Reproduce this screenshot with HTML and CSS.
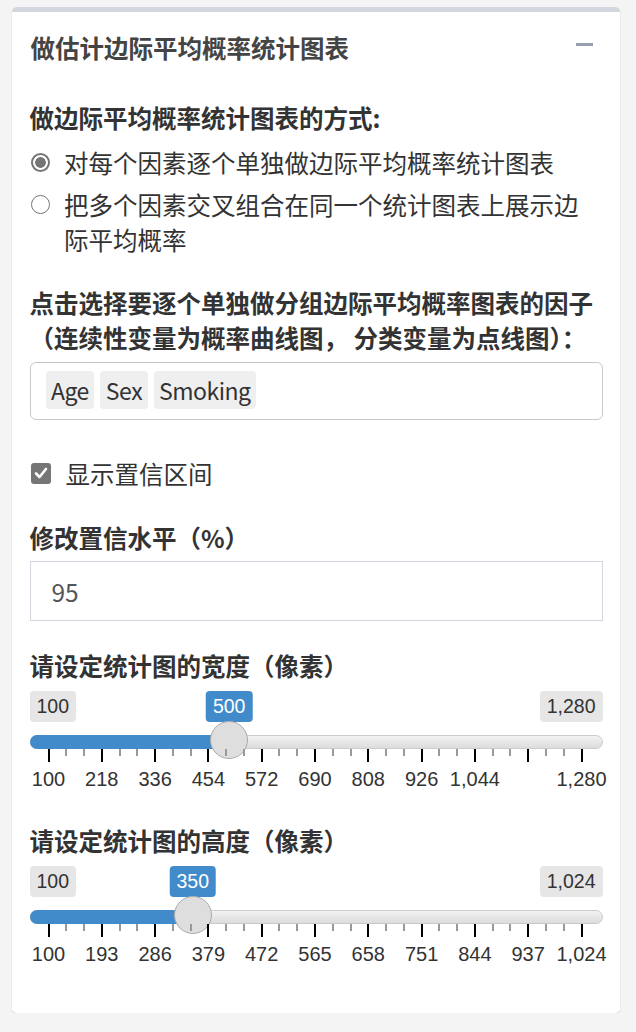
FILE: index.html
```html
<!DOCTYPE html>
<html lang="zh-CN">
<head>
  <meta charset="UTF-8">
  <meta name="viewport" content="width=device-width, initial-scale=1.0">
  <title>做估计边际平均概率统计图表</title>
  <link rel="stylesheet" href="styles.css">
</head>
<body>
  <div class="box">
    <div class="box-header">
      <h3 class="box-title">做估计边际平均概率统计图表</h3>
      <button class="btn-collapse" type="button"><span></span></button>
    </div>

    <div class="box-body">
      <div class="form-group group-radio">
        <label class="control-label">做边际平均概率统计图表的方式:</label>
        <div class="radio radio-first">
          <span class="radio-dot checked"></span>
          <span class="radio-text">对每个因素逐个单独做边际平均概率统计图表</span>
        </div>
        <div class="radio">
          <span class="radio-dot"></span>
          <span class="radio-text">把多个因素交叉组合在同一个统计图表上展示边际平均概率</span>
        </div>
      </div>

      <div class="form-group group-factors">
        <label class="control-label">点击选择要逐个单独做分组边际平均概率图表的因子（连续性变量为概率曲线图， 分类变量为点线图）：</label>
        <div class="selectize">
          <span class="tag">Age</span>
          <span class="tag">Sex</span>
          <span class="tag">Smoking</span>
        </div>
      </div>

      <div class="checkbox">
        <span class="check-box">
          <svg width="14" height="14" viewBox="0 0 14 14"><path d="M2 7.5 L5.5 11 L12 3" fill="none" stroke="#fff" stroke-width="2.6" stroke-linecap="round" stroke-linejoin="round"/></svg>
        </span>
        <span>显示置信区间</span>
      </div>

      <div class="form-group group-conf">
        <label class="control-label">修改置信水平（%）</label>
        <input class="form-control" type="text" value="95">
      </div>

      <div class="form-group group-slider">
        <label class="control-label">请设定统计图的宽度（像素）</label>
        <div class="irs" data-min="100" data-max="1280" data-value="500"
             data-labels="100 218 336 454 572 690 808 926 1,044 - 1,280"></div>
      </div>

      <div class="form-group group-last">
        <label class="control-label">请设定统计图的高度（像素）</label>
        <div class="irs" data-min="100" data-max="1024" data-value="350"
             data-labels="100 193 286 379 472 565 658 751 844 937 1,024"></div>
      </div>
    </div>
  </div>

  <script>
    function fmt(n) {
      return n.toLocaleString("en-US");
    }

    document.querySelectorAll(".irs").forEach(el => {
      const min = +el.dataset.min;
      const max = +el.dataset.max;
      const value = +el.dataset.value;
      const labels = el.dataset.labels.split(" ");
      const pos = ((value - min) / (max - min)).toFixed(4);
      const center = `calc(19px + (100% - 40px) * ${pos})`;

      let grid = "";
      for (let i = 0; i <= 10; i++) {
        grid += `<span class="irs-tick" style="left:${i * 10}%"></span>`;
        if (i < 10) {
          grid += `<span class="irs-tick small" style="left:${i * 10 + 10 / 3}%"></span>`;
          grid += `<span class="irs-tick small" style="left:${i * 10 + 20 / 3}%"></span>`;
        }
        if (labels[i] !== "-") {
          grid += `<span class="irs-grid-text" style="left:${i * 10}%">${labels[i]}</span>`;
        }
      }

      el.innerHTML = `
        <span class="irs-line"></span>
        <span class="irs-bar" style="width:${center}"></span>
        <span class="irs-min">${fmt(min)}</span>
        <span class="irs-max">${fmt(max)}</span>
        <span class="irs-single" style="left:${center}">${fmt(value)}</span>
        <span class="irs-handle" style="left:${center}"></span>
        <span class="irs-grid">${grid}</span>`;
    });
  </script>
</body>
</html>
```

FILE: styles.css
```css
* {
  box-sizing: border-box;
}

body {
  margin: 0;
  padding: 7px 0 0 12px;
  background-color: #f4f4f4;
  font-family: "Noto Sans CJK SC", "Noto Sans", sans-serif;
  font-size: 24.5px;
  line-height: 35px;
  color: #333;
}

.box {
  width: 608px;
  background-color: #fff;
  border-top: 5px solid #d2d6de;
  border-radius: 5px;
  box-shadow: 0 1px 2px rgba(0, 0, 0, 0.12);
}

.box-header {
  display: flex;
  justify-content: space-between;
  align-items: flex-start;
  padding: 17.5px 27px 17.5px 18.5px;
}

.box-title {
  margin: 0;
  font-size: 24.5px;
  line-height: 35px;
  font-weight: bold;
  color: #444;
}

.btn-collapse {
  display: block;
  padding: 13.5px 0 0;
  border: none;
  background: none;
}

.btn-collapse span {
  display: block;
  width: 17px;
  height: 3px;
  background-color: #97a0b3;
}

.box-body {
  padding: 17.5px 17.5px 48px;
}

.control-label {
  display: block;
  font-weight: bold;
  color: #333;
}

/* radio group */
.group-radio {
  margin-bottom: 27.5px;
}

.group-radio .control-label {
  margin-bottom: 10px;
}

.radio {
  display: flex;
  align-items: flex-start;
}

.radio-first {
  margin-bottom: 7.5px;
}

.radio-dot {
  flex: none;
  width: 19px;
  height: 19px;
  margin: 8px 14px 0 1.5px;
  border: 1.5px solid #767676;
  border-radius: 50%;
}

.radio-dot.checked {
  border-width: 2px;
  background: radial-gradient(circle, #767676 0 5px, transparent 5.6px);
}

.radio-text {
  flex: 1;
  padding-right: 10px;
}

/* factor picker */
.group-factors {
  margin-bottom: 35.5px;
}

.group-factors .control-label {
  margin-bottom: 7.5px;
}

.selectize {
  display: flex;
  gap: 6px;
  height: 58px;
  padding: 8px 15px;
  border: 1px solid #c8c8c8;
  border-radius: 6px;
}

.tag {
  height: 38px;
  line-height: 38px;
  padding: 0 5.5px;
  background-color: #efefef;
  border-radius: 4px;
  font-size: 23px;
  letter-spacing: -0.5px;
}

/* checkbox */
.checkbox {
  display: flex;
  align-items: center;
  margin-bottom: 29px;
}

.check-box {
  display: flex;
  align-items: center;
  justify-content: center;
  width: 20px;
  height: 21px;
  margin: 0 15px 0 1px;
  background-color: #767676;
  border-radius: 3px;
}

/* confidence input */
.group-conf {
  margin-bottom: 26.5px;
}

.group-conf .control-label {
  margin-bottom: 6.5px;
}

.form-control {
  display: block;
  width: 100%;
  height: 60px;
  padding: 0 21px;
  border: 1.5px solid #d2d6de;
  font-family: "Noto Sans CJK SC", "Noto Sans", sans-serif;
  font-size: 24.5px;
  color: #555;
  outline: none;
}

/* sliders */
.group-slider {
  margin-bottom: 32.5px;
}

.group-slider .control-label,
.group-last .control-label {
  margin-bottom: 8.5px;
}

.irs {
  position: relative;
  height: 99px;
  font-family: "Liberation Sans", Arial, sans-serif;
  font-size: 19.5px;
  line-height: 22px;
  color: #333;
}

.irs-line {
  position: absolute;
  top: 44px;
  left: 0;
  right: 0;
  height: 14px;
  border: 1px solid #cccccc;
  border-radius: 7px;
  background: linear-gradient(to bottom, #f2f2f2, #dcdcdc);
}

.irs-bar {
  position: absolute;
  top: 44px;
  left: 0;
  height: 14px;
  background-color: #428bca;
  border-radius: 7px 0 0 7px;
}

.irs-min,
.irs-max,
.irs-single {
  position: absolute;
  top: 0;
  height: 31px;
  line-height: 31px;
  padding: 0 7px;
  border-radius: 4px;
}

.irs-min {
  left: 0;
  background-color: #e6e6e6;
}

.irs-max {
  right: 0;
  background-color: #e6e6e6;
}

.irs-single {
  transform: translateX(-50%);
  background-color: #428bca;
  color: #fff;
}

.irs-handle {
  position: absolute;
  top: 30px;
  width: 38px;
  height: 38px;
  margin-left: -19px;
  border: 1px solid #ababab;
  border-radius: 50%;
  background-color: #dedede;
}

.irs-grid {
  position: absolute;
  top: 58px;
  left: 19px;
  right: 21px;
  height: 40px;
}

.irs-tick {
  position: absolute;
  top: 0;
  width: 2px;
  height: 13px;
  margin-left: -1px;
  background-color: #000;
}

.irs-tick.small {
  height: 7px;
  background-color: #999;
}

.irs-grid-text {
  position: absolute;
  top: 19px;
  transform: translateX(-50%);
  white-space: nowrap;
  font-size: 20px;
}
```
